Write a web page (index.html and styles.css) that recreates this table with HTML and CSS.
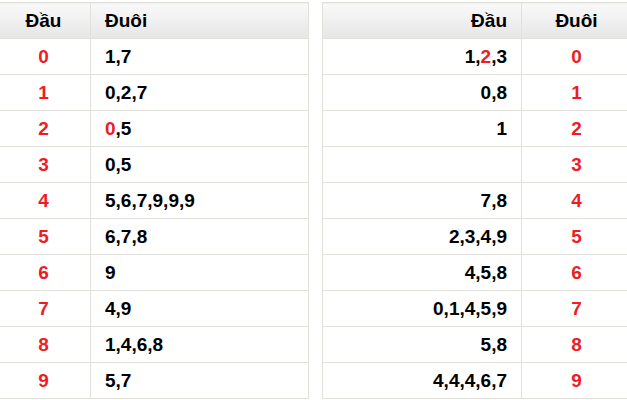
FILE: index.html
```html
<!DOCTYPE html>
<html>
<head>
<meta charset="utf-8">
<link rel="stylesheet" href="styles.css">
</head>
<body>
<div class="wrap">
  <table class="lt left">
    <thead><tr><th class="c1">Đầu</th><th class="c2">Đuôi</th></tr></thead>
    <tbody>
      <tr><td class="num">0</td><td class="val">1,7</td></tr>
      <tr><td class="num">1</td><td class="val">0,2,7</td></tr>
      <tr><td class="num">2</td><td class="val"><span class="red">0</span>,5</td></tr>
      <tr><td class="num">3</td><td class="val">0,5</td></tr>
      <tr><td class="num">4</td><td class="val">5,6,7,9,9,9</td></tr>
      <tr><td class="num">5</td><td class="val">6,7,8</td></tr>
      <tr><td class="num">6</td><td class="val">9</td></tr>
      <tr><td class="num">7</td><td class="val">4,9</td></tr>
      <tr><td class="num">8</td><td class="val">1,4,6,8</td></tr>
      <tr><td class="num">9</td><td class="val">5,7</td></tr>
    </tbody>
  </table>
  <table class="lt right">
    <thead><tr><th class="c1">Đầu</th><th class="c2">Đuôi</th></tr></thead>
    <tbody>
      <tr><td class="val">1,<span class="red">2</span>,3</td><td class="num">0</td></tr>
      <tr><td class="val">0,8</td><td class="num">1</td></tr>
      <tr><td class="val">1</td><td class="num">2</td></tr>
      <tr><td class="val"></td><td class="num">3</td></tr>
      <tr><td class="val">7,8</td><td class="num">4</td></tr>
      <tr><td class="val">2,3,4,9</td><td class="num">5</td></tr>
      <tr><td class="val">4,5,8</td><td class="num">6</td></tr>
      <tr><td class="val">0,1,4,5,9</td><td class="num">7</td></tr>
      <tr><td class="val">5,8</td><td class="num">8</td></tr>
      <tr><td class="val">4,4,4,6,7</td><td class="num">9</td></tr>
    </tbody>
  </table>
</div>
</body>
</html>
```
FILE: styles.css
```css
html, body {
  margin: 0;
  padding: 0;
  background: #fff;
  overflow: hidden;
}
body {
  font-family: "Liberation Sans", Arial, sans-serif;
  font-weight: bold;
  color: #000;
}
.wrap {
  display: flex;
  gap: 13px;
  margin-left: -4px;
  padding-top: 2px;
}
.lt {
  border-collapse: collapse;
  table-layout: fixed;
  flex: none;
}
.lt.left { width: 313px; }
.lt.right { width: 310px; }
.lt th, .lt td {
  box-sizing: border-box;
  border: 1px solid #e2e0db;
  padding: 0 14px;
  font-size: 19px;
  line-height: 20px;
  white-space: nowrap;
}
.lt th {
  height: 36px;
  background: linear-gradient(#f9f9f9, #e6e6e6);
  color: #000;
  font-weight: bold;
}
.lt td {
  height: 36px;
}
.left .c1 { width: 94px; text-align: center; }
.left .c2 { text-align: left; }
.right .c1 { text-align: right; }
.right .c2 { width: 110px; text-align: center; }
.num {
  text-align: center;
  color: #ee1c25;
}
.left .val { text-align: left; }
.right .val { text-align: right; }
.red { color: #ee1c25; }
```
